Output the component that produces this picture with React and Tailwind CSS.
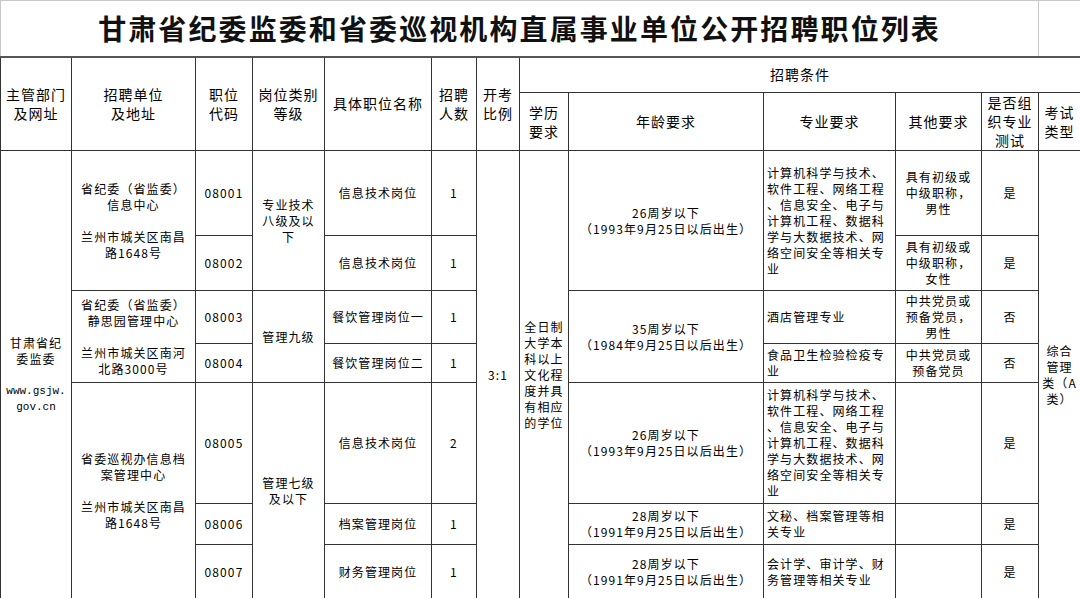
const major = [
  "计算机科学与技术、",
  "软件工程、网络工程",
  "、信息安全、电子与",
  "计算机工程、数据科",
  "学与大数据技术、网",
  "络空间安全等相关专",
  "业",
];

function Lines({ lines, className = "" }) {
  return (
    <div className={className}>
      {lines.map((l, i) => (
        <div key={i} className="whitespace-nowrap">
          {l || "\u00a0"}
        </div>
      ))}
    </div>
  );
}

const th = "border border-[#333] text-center align-middle p-0 font-normal text-[14px] tracking-[1px] leading-[19px] text-black";
const td = "border border-[#333] text-center align-middle p-0";

export default function App() {
  return (
    <div className="w-[1080px] h-[598px] bg-white overflow-hidden font-['Noto_Sans_CJK_SC',sans-serif] text-black">
      <table className="table-fixed border-collapse w-[1080px]">
        <colgroup>
          <col className="w-[71px]" />
          <col className="w-[124px]" />
          <col className="w-[57px]" />
          <col className="w-[72px]" />
          <col className="w-[107px]" />
          <col className="w-[45px]" />
          <col className="w-[43px]" />
          <col className="w-[49px]" />
          <col className="w-[195px]" />
          <col className="w-[132px]" />
          <col className="w-[86px]" />
          <col className="w-[57px]" />
          <col className="w-[42px]" />
        </colgroup>
        <tbody>
          <tr className="h-[56px]">
            <td
              colSpan={12}
              className="border-t border-l border-r border-[#c8c8c8] border-b-2 border-b-[#555] text-center align-middle text-[28px] tracking-[2.1px] font-bold leading-none text-[#111] p-0"
            >
              甘肃省纪委监委和省委巡视机构直属事业单位公开招聘职位列表
            </td>
            <td className="border-t border-[#c8c8c8] border-b-2 border-b-[#555]" />
          </tr>
          <tr className="h-[36px]">
            <th rowSpan={2} className={th}>
              主管部门
              <br />
              及网址
            </th>
            <th rowSpan={2} className={th}>
              招聘单位
              <br />
              及地址
            </th>
            <th rowSpan={2} className={th}>
              职位
              <br />
              代码
            </th>
            <th rowSpan={2} className={th}>
              岗位类别
              <br />
              等级
            </th>
            <th rowSpan={2} className={th}>
              具体职位名称
            </th>
            <th rowSpan={2} className={th}>
              招聘
              <br />
              人数
            </th>
            <th rowSpan={2} className={th}>
              开考
              <br />
              比例
            </th>
            <th colSpan={6} className={th}>
              招聘条件
            </th>
          </tr>
          <tr className="h-[54px]">
            <th className={th}>
              学历
              <br />
              要求
            </th>
            <th className={th}>年龄要求</th>
            <th className={th}>专业要求</th>
            <th className={th}>其他要求</th>
            <th className={`${th} leading-[17px]`}>
              是否组
              <br />
              织专业
              <br />
              测试
            </th>
            <th className={th}>
              考试
              <br />
              类型
            </th>
          </tr>
        </tbody>
        <tbody className="text-[12px] leading-[16px] tracking-[1.1px]">
          <tr className="h-[85px]">
            <td rowSpan={7} className={td}>
              <Lines lines={["甘肃省纪", "委监委", ""]} />
              <div className="font-['Liberation_Mono',monospace] text-[11px] tracking-normal leading-[16px]">
                www.gsjw.
                <br />
                gov.cn
              </div>
            </td>
            <td rowSpan={2} className={td}>
              <Lines lines={["省纪委（省监委）", "信息中心", "", "兰州市城关区南昌", "路1648号"]} />
            </td>
            <td className={td}>08001</td>
            <td rowSpan={2} className={td}>
              <Lines lines={["专业技术", "八级及以", "下"]} />
            </td>
            <td className={td}>信息技术岗位</td>
            <td className={td}>1</td>
            <td rowSpan={7} className={td}>
              3:1
            </td>
            <td rowSpan={7} className={td}>
              <Lines lines={["全日制", "大学本", "科以上", "文化程", "度并具", "有相应", "的学位"]} />
            </td>
            <td rowSpan={2} className={td}>
              <Lines lines={["26周岁以下", "（1993年9月25日以后出生）"]} />
            </td>
            <td rowSpan={2} className={`${td} text-left pl-[3px]`}>
              <Lines lines={major} />
            </td>
            <td className={td}>
              <Lines lines={["具有初级或", "中级职称，", "男性"]} />
            </td>
            <td className={td}>是</td>
            <td rowSpan={7} className={td}>
              <Lines lines={["综合", "管理", "类（A", "类）"]} />
            </td>
          </tr>
          <tr className="h-[55px]">
            <td className={td}>08002</td>
            <td className={td}>信息技术岗位</td>
            <td className={td}>1</td>
            <td className={td}>
              <Lines lines={["具有初级或", "中级职称，", "女性"]} />
            </td>
            <td className={td}>是</td>
          </tr>
          <tr className="h-[53px]">
            <td rowSpan={2} className={td}>
              <Lines lines={["省纪委（省监委）", "静思园管理中心", "", "兰州市城关区南河", "北路3000号"]} />
            </td>
            <td className={td}>08003</td>
            <td rowSpan={2} className={td}>
              管理九级
            </td>
            <td className={td}>餐饮管理岗位一</td>
            <td className={td}>1</td>
            <td rowSpan={2} className={td}>
              <Lines lines={["35周岁以下", "（1984年9月25日以后出生）"]} />
            </td>
            <td className={`${td} text-left pl-[3px]`}>酒店管理专业</td>
            <td className={td}>
              <Lines lines={["中共党员或", "预备党员，", "男性"]} />
            </td>
            <td className={td}>否</td>
          </tr>
          <tr className="h-[39px]">
            <td className={td}>08004</td>
            <td className={td}>餐饮管理岗位二</td>
            <td className={td}>1</td>
            <td className={`${td} text-left pl-[3px]`}>
              <Lines lines={["食品卫生检验检疫专", "业"]} />
            </td>
            <td className={td}>
              <Lines lines={["中共党员或", "预备党员"]} />
            </td>
            <td className={td}>否</td>
          </tr>
          <tr className="h-[121px]">
            <td rowSpan={3} className={td}>
              <Lines lines={["省委巡视办信息档", "案管理中心", "", "兰州市城关区南昌", "路1648号"]} />
            </td>
            <td className={td}>08005</td>
            <td rowSpan={3} className={td}>
              <Lines lines={["管理七级", "及以下"]} />
            </td>
            <td className={td}>信息技术岗位</td>
            <td className={td}>2</td>
            <td className={td}>
              <Lines lines={["26周岁以下", "（1993年9月25日以后出生）"]} />
            </td>
            <td className={`${td} text-left pl-[3px]`}>
              <Lines lines={major} />
            </td>
            <td className={td} />
            <td className={td}>是</td>
          </tr>
          <tr className="h-[41px]">
            <td className={td}>08006</td>
            <td className={td}>档案管理岗位</td>
            <td className={td}>1</td>
            <td className={td}>
              <Lines lines={["28周岁以下", "（1991年9月25日以后出生）"]} />
            </td>
            <td className={`${td} text-left pl-[3px]`}>
              <Lines lines={["文秘、档案管理等相", "关专业"]} />
            </td>
            <td className={td} />
            <td className={td}>是</td>
          </tr>
          <tr className="h-[54px]">
            <td className={td}>08007</td>
            <td className={td}>财务管理岗位</td>
            <td className={td}>1</td>
            <td className={td}>
              <Lines lines={["28周岁以下", "（1991年9月25日以后出生）"]} />
            </td>
            <td className={`${td} text-left pl-[3px]`}>
              <Lines lines={["会计学、审计学、财", "务管理等相关专业"]} />
            </td>
            <td className={td} />
            <td className={td}>是</td>
          </tr>
        </tbody>
      </table>
    </div>
  );
}
